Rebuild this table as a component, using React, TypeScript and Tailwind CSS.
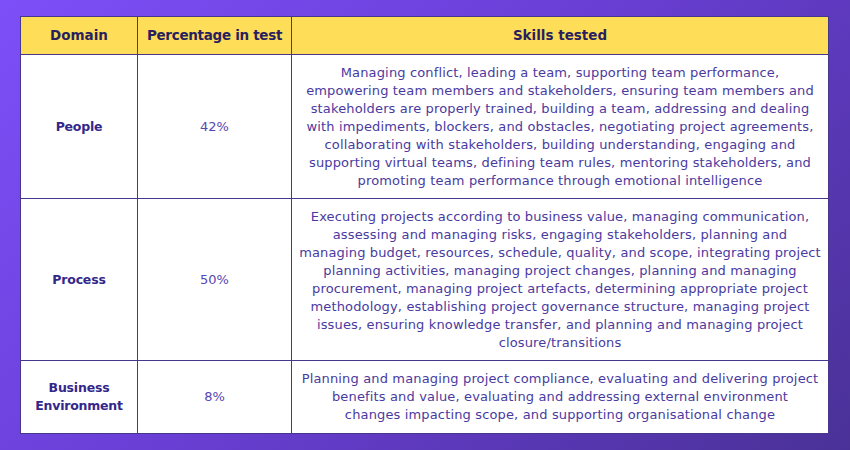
const rows = [
  {
    domain: ["People"],
    pct: "42%",
    h: "h-[144px]",
    skills: [
      "Managing conflict, leading a team, supporting team performance,",
      "empowering team members and stakeholders, ensuring team members and",
      "stakeholders are properly trained, building a team, addressing and dealing",
      "with impediments, blockers, and obstacles, negotiating project agreements,",
      "collaborating with stakeholders, building understanding, engaging and",
      "supporting virtual teams, defining team rules, mentoring stakeholders, and",
      "promoting team performance through emotional intelligence",
    ],
  },
  {
    domain: ["Process"],
    pct: "50%",
    h: "h-[162px]",
    skills: [
      "Executing projects according to business value, managing communication,",
      "assessing and managing risks, engaging stakeholders, planning and",
      "managing budget, resources, schedule, quality, and scope, integrating project",
      "planning activities, managing project changes, planning and managing",
      "procurement, managing project artefacts, determining appropriate project",
      "methodology, establishing project governance structure, managing project",
      "issues, ensuring knowledge transfer, and planning and managing project",
      "closure/transitions",
    ],
  },
  {
    domain: ["Business", "Environment"],
    pct: "8%",
    h: "h-[72px]",
    skills: [
      "Planning and managing project compliance, evaluating and delivering project",
      "benefits and value, evaluating and addressing external environment",
      "changes impacting scope, and supporting organisational change",
    ],
  },
];

export default function App() {
  return (
    <div
      className="w-[850px] h-[450px] pt-4 pl-5 bg-[linear-gradient(135deg,#7d4ff8_0%,#6a3fd6_45%,#4a3197_100%)]"
      style={{ fontFamily: '"DejaVu Sans", sans-serif' }}
    >
      <div className="w-[809px] border border-[#46378c] bg-white">
        <div className="grid grid-cols-[117px_154px_1fr] h-[38px] bg-[#fedd59] text-[#2a1f5e] text-[13.5px] font-bold border-b border-[#46378c]">
          <div className="flex items-center justify-center border-r border-[#46378c]">Domain</div>
          <div className="flex items-center justify-center border-r border-[#46378c] tracking-[-0.3px]">Percentage in test</div>
          <div className="flex items-center justify-center">Skills tested</div>
        </div>
        {rows.map((r, i) => (
          <div
            key={r.pct}
            className={`grid grid-cols-[117px_154px_1fr] ${r.h} ${i < rows.length - 1 ? "border-b border-[#46378c]" : ""}`}
          >
            <div className="flex flex-col items-center justify-center border-r border-[#46378c] text-[12.5px] font-bold text-[#34278a] leading-[18px] tracking-[-0.2px]">
              {r.domain.map((d) => (
                <span key={d}>{d}</span>
              ))}
            </div>
            <div className="flex items-center justify-center border-r border-[#46378c] text-[13px] text-[#5747b0]">
              {r.pct}
            </div>
            <div className="flex flex-col items-center justify-center text-[13px] leading-[18px] text-[#4a3aa0] tracking-[0.15px]">
              {r.skills.map((s) => (
                <span key={s} className="whitespace-nowrap">{s}</span>
              ))}
            </div>
          </div>
        ))}
      </div>
    </div>
  );
}
